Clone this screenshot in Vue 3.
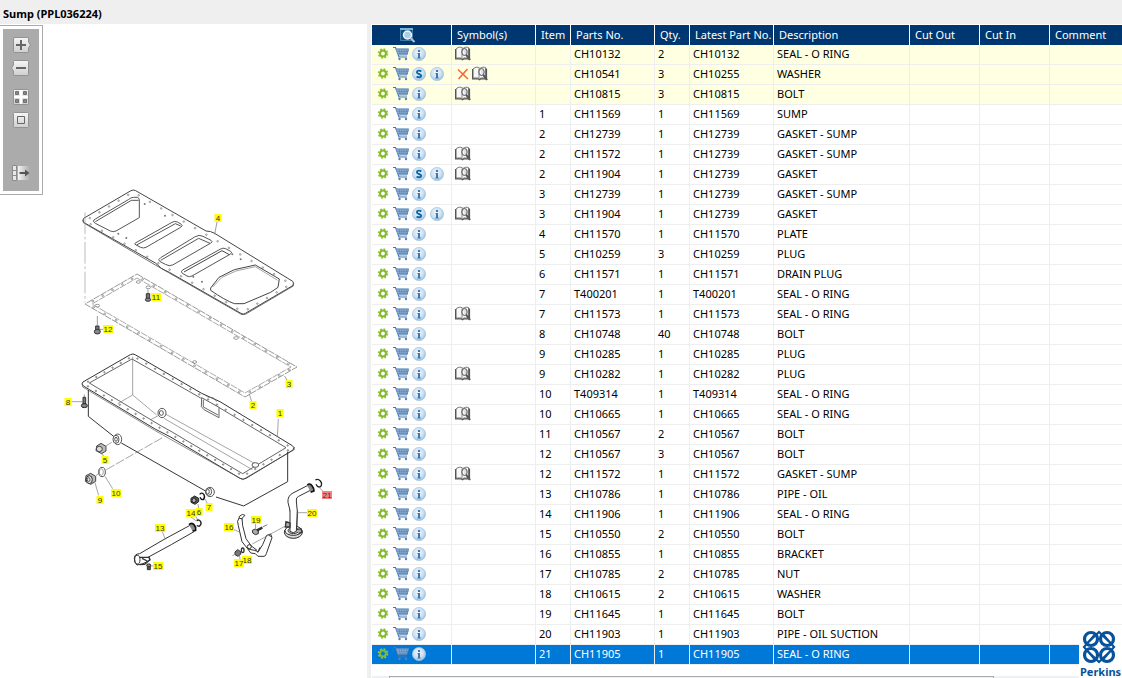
<script setup>
import { ref } from 'vue'

// symbols: b = page reference, x = not serviced; s = supersession available
const source = [
  ['', 'CH10132', '2', 'CH10132', 'SEAL - O RING', 'b'],
  ['', 'CH10541', '3', 'CH10255', 'WASHER', 'xb', true],
  ['', 'CH10815', '3', 'CH10815', 'BOLT', 'b'],
  ['1', 'CH11569', '1', 'CH11569', 'SUMP', ''],
  ['2', 'CH12739', '1', 'CH12739', 'GASKET - SUMP', ''],
  ['2', 'CH11572', '1', 'CH12739', 'GASKET - SUMP', 'b'],
  ['2', 'CH11904', '1', 'CH12739', 'GASKET', 'b', true],
  ['3', 'CH12739', '1', 'CH12739', 'GASKET - SUMP', ''],
  ['3', 'CH11904', '1', 'CH12739', 'GASKET', 'b', true],
  ['4', 'CH11570', '1', 'CH11570', 'PLATE', ''],
  ['5', 'CH10259', '3', 'CH10259', 'PLUG', ''],
  ['6', 'CH11571', '1', 'CH11571', 'DRAIN PLUG', ''],
  ['7', 'T400201', '1', 'T400201', 'SEAL - O RING', ''],
  ['7', 'CH11573', '1', 'CH11573', 'SEAL - O RING', 'b'],
  ['8', 'CH10748', '40', 'CH10748', 'BOLT', ''],
  ['9', 'CH10285', '1', 'CH10285', 'PLUG', ''],
  ['9', 'CH10282', '1', 'CH10282', 'PLUG', 'b'],
  ['10', 'T409314', '1', 'T409314', 'SEAL - O RING', ''],
  ['10', 'CH10665', '1', 'CH10665', 'SEAL - O RING', 'b'],
  ['11', 'CH10567', '2', 'CH10567', 'BOLT', ''],
  ['12', 'CH10567', '3', 'CH10567', 'BOLT', ''],
  ['12', 'CH11572', '1', 'CH11572', 'GASKET - SUMP', 'b'],
  ['13', 'CH10786', '1', 'CH10786', 'PIPE - OIL', ''],
  ['14', 'CH11906', '1', 'CH11906', 'SEAL - O RING', ''],
  ['15', 'CH10550', '2', 'CH10550', 'BOLT', ''],
  ['16', 'CH10855', '1', 'CH10855', 'BRACKET', ''],
  ['17', 'CH10785', '2', 'CH10785', 'NUT', ''],
  ['18', 'CH10615', '2', 'CH10615', 'WASHER', ''],
  ['19', 'CH11645', '1', 'CH11645', 'BOLT', ''],
  ['20', 'CH11903', '1', 'CH11903', 'PIPE - OIL SUCTION', ''],
  ['21', 'CH11905', '1', 'CH11905', 'SEAL - O RING', '']
]
const parts = source.map(([item, no, qty, latest, desc, symbols, s]) => ({ item, no, qty, latest, desc, symbols, s: !!s }))
const selected = ref(parts.length - 1)

const callouts = [
  ['4', 218, 218], ['11', 156, 297], ['12', 108, 329], ['3', 289, 384], ['2', 253, 405],
  ['1', 280, 413], ['8', 68, 402], ['5', 105, 460], ['9', 100, 500], ['10', 116, 493],
  ['7', 209, 507], ['14', 191, 513], ['6', 199, 512], ['13', 160, 528], ['15', 158, 566],
  ['16', 229, 527], ['19', 256, 520], ['18', 247, 560], ['17', 239, 563], ['20', 312, 513], ['21', 327, 495]
].map(([n, x, y]) => ({ n, x, y, w: n.length > 1 ? 10 : 7 }))

function along(points, counts) {
  const out = []
  points.forEach(([x1, y1], i) => {
    const [x2, y2] = points[(i + 1) % points.length]
    for (let k = 0; k < counts[i]; k++) {
      const t = (k + 0.5) / counts[i]
      out.push({ x: x1 + (x2 - x1) * t, y: y1 + (y2 - y1) * t })
    }
  })
  return out
}
const plateHoles = along([[133, 192], [291, 284], [243, 312], [85, 221]], [14, 5, 14, 5])
const gasketHoles = along([[137, 276], [294, 367], [245, 395], [88, 304]], [14, 5, 14, 5])
const rimHoles = along([[133, 356], [292, 448], [243, 476], [84, 384]], [18, 6, 20, 6])
</script>

<template>
  <div class="page">
    <svg class="defs" aria-hidden="true">
      <defs>
        <radialGradient id="disc" cx=".45" cy=".4" r=".6">
          <stop offset="0" stop-color="#f2f7fc" /><stop offset=".65" stop-color="#cbdff1" /><stop offset="1" stop-color="#98bfde" />
        </radialGradient>
        <linearGradient id="key" x2="0" y2="1">
          <stop offset="0" stop-color="#f6f6f6" /><stop offset="1" stop-color="#cfcfcf" />
        </linearGradient>
        <linearGradient id="fade">
          <stop offset="0" stop-color="#f4f4f4" /><stop offset="1" stop-color="#ababab" />
        </linearGradient>
      </defs>
      <symbol id="gear" viewBox="0 0 13 16">
        <circle cx="6" cy="7.500" r="4.300" fill="none" stroke="#98c840" stroke-width="2" stroke-dasharray="1.800 1.577" />
        <circle cx="6" cy="7.500" r="2.900" fill="none" stroke="#82b92f" stroke-width="2" />
      </symbol>
      <symbol id="cart" viewBox="0 0 16 16">
        <path d="M0 1.500h2.500l3.500 9.500h8" fill="none" stroke="#4a76aa" stroke-width="1.200" />
        <path d="M3 2.500h13l-2 6H5z" fill="#9dbbdc" />
        <path d="M3 3h12.500M4 5.200h11.500M4.500 7.200H15M5 9h9M15.500 3l-1.500 6" fill="none" stroke="#4573aa" stroke-width=".7" />
        <path d="M6 3l1.300 6M8.500 3l.5 6M11 3v6M13.500 3l-.8 6" fill="none" stroke="#527fb3" stroke-width=".6" />
        <circle cx="6.500" cy="13" r="1.200" fill="#4a86c5" /><circle cx="13" cy="13" r="1.200" fill="#4a86c5" />
      </symbol>
      <symbol id="info" viewBox="0 0 15 15">
        <circle cx="7" cy="7" r="6.600" fill="url(#disc)" stroke="#a4c4de" stroke-width=".7" />
        <path d="M6 3h2v2H6zM5.500 6H8v4.500h.7v1H5.400v-1H6V7h-.5z" fill="#3f78ae" />
      </symbol>
      <symbol id="super" viewBox="0 0 15 15">
        <circle cx="7" cy="7" r="6.600" fill="url(#disc)" stroke="#a4c4de" stroke-width=".7" />
        <path d="M9.300 4.500C8 3.300 4.900 3.200 4.900 5.200c0 2 4.300 1.600 4.300 3.600 0 2-3.200 1.800-4.600.7" fill="none" stroke="#0868a8" stroke-width="1.900" />
      </symbol>
      <symbol id="book" viewBox="0 0 16 16">
        <path d="M1 3L3 1.500C5 1 6.500 1 8 2.500 9.500 1 12 1 13.500 1.500V12H9l-1.500 1L6 12H1z" fill="#f7f7f7" stroke="#777" />
        <path d="M.5 3v9.800H6l1.500 1 1.500-1h5.500V2.500" fill="none" stroke="#555" stroke-width="1.200" />
        <path d="M7 2.500v10" stroke="#888" />
        <ellipse cx="9.500" cy="6" rx="2.700" ry="3.500" fill="#dce0e4" stroke="#555" />
        <path d="M8.700 4.500v3.500" stroke="#fff" />
        <path d="M11.300 8.800l3.700 5.200" stroke="#555" stroke-width="2" />
      </symbol>
      <symbol id="cross" viewBox="0 0 12 16">
        <path d="M1 3.500l10 9.500M10.500 3L1.500 13" stroke="#f76932" stroke-width="1.600" fill="none" />
      </symbol>
    </svg>

    <section class="drawing-pane">
      <h1>Sump (PPL036224)</h1>
      <div class="stage">
        <svg class="drawing" viewBox="0 24 367 654" role="img" aria-label="Sump exploded view">
          <g fill="none" stroke="#6d6d6d" stroke-width="3">
            <!-- cover plate -->
            <g transform="translate(70 180) scale(.33333)">
              <path d="M183 32q7-4 14 0L408 153q14 0 26 7L668 304q6 6 0 13L526 400q-6 5-13 0L298 277q-24-8-42-28L44 129q-10-5-3-14z" stroke="#444" />
              <path d="M40 120v8L256 255l40 23 220 126 10-1 144-85v-9" stroke="#555" stroke-width="2.500" />
              <path d="M190 52h12q6 2 6 8v53l-70 40q-8 4-17 0L76 130q-11-7 0-13L175 59q8-7 15-7z" stroke="#555" />
              <path d="M76 125l108-64h22M198 188l108-61q8-5 16-1l12 7q6 4-2 9L228 202q-8 4-16 0l-14-7q-8-4 0-7z" stroke="#555" />
              <path d="M200 195l116-64 16 7M272 233l102-62q14-9 25-2l24 12q8 4-2 9L308 255q-10 5-22-2l-17-9q-7-5 3-11z" stroke="#555" />
              <path d="M272 241l114-66 34 15M338 270l112-62q9-6 17-2l15 8q7 4-2 9L366 288q-8 4-15 0l-14-8q-6-5 1-10z" stroke="#555" />
              <path d="M342 276l114-64 22 12M422 324l25-32 46-23 63-14 72 42-4 25-22 15-80 34h-29q-28-10-71-40z" stroke="#444" />
              <path d="M428 321l28-29 42-19 58-13 67 41" stroke="#777" stroke-width="2" />
              <path d="M45 97v270" stroke-width="2" stroke="#999" stroke-dasharray="65 8 8 8" />
              <path d="M441 126l-7 37M82 408v28M234 328v16M245 352h14M88 448h12" stroke-width="2" />
              <path d="M77 438h10v14H77zM229 341h10v16h-10z" fill="#777" stroke="#333" />
              <ellipse cx="82" cy="455" rx="9" ry="7" fill="#888" stroke="#333" /><ellipse cx="234" cy="359" rx="8" ry="5" fill="#888" stroke="#333" />
              <g stroke-width="2"><ellipse cx="235" cy="322" rx="7" ry="4" /><ellipse cx="205" cy="306" rx="6" ry="4" /><ellipse cx="82" cy="377" rx="7" ry="4" /><ellipse cx="498" cy="474" rx="7" ry="4" /></g>
              <g fill="#777" stroke="none"><circle cx="224" cy="72" r="3" /><circle cx="285" cy="107" r="3" /><circle cx="145" cy="161" r="3" /><circle cx="169" cy="174" r="3" /><circle cx="487" cy="223" r="3" /><circle cx="512" cy="238" r="3" /><circle cx="370" cy="290" r="3" /><circle cx="396" cy="305" r="3" /></g>
            </g>
            <!-- gasket -->
            <path d="M137 274L297 367 245 397 85 304z" stroke="#999" stroke-width="1" stroke-dasharray="7 1" />
            <path d="M137 278L291 367 245 393 92 304z" stroke="#aaa" stroke-width="1" stroke-dasharray="7 1" />
            <circle v-for="(h, i) in plateHoles" :key="'p' + i" :cx="h.x" :cy="h.y" r=".8" stroke="#777" stroke-width=".7" />
            <circle v-for="(h, i) in gasketHoles" :key="'g' + i" :cx="h.x" :cy="h.y" r=".9" stroke="#777" stroke-width=".7" />
            <!-- sump -->
            <g transform="translate(60 340) scale(.33333)">
              <path d="M211 44q8-5 16 1L425 160l55 25 217 132q9 6 2 13L558 415q-8 5-18 0L330 290l-43-22L70 138q-8-6-1-12z" stroke="#333" />
              <path d="M216 57L422 174l56 29 200 120-130 78L338 277l-34-19L88 129z" stroke="#444" stroke-width="2.500" />
              <path d="M68 133v8l216 130 44 25 220 123 155-90v-8" stroke="#555" stroke-width="2" />
              <path d="M85 150v79l77 61M184 309l256 146M468 471l83 27 132-73v-90" stroke="#333" />
              <path d="M218 50v115l-45 26M218 165l72 60M270 240l25-13M316 222l280 155M312 235l265 154" stroke="#777" stroke-width="2" />
              <path d="M425 173l52 29v31l-45-24-8-9zM430 179v22l44 24" fill="#fff" stroke="#666" stroke-width="3" />
              <path d="M435 165l10 7 15 1 10 12" stroke-width="2" />
              <g fill="#fff" stroke="#555"><ellipse cx="306" cy="219" rx="12" ry="14" /><ellipse cx="304" cy="219" rx="6" ry="7" /><ellipse cx="173" cy="298" rx="12" ry="16" /><ellipse cx="168" cy="298" rx="9" ry="12" /><ellipse cx="168" cy="298" rx="4" ry="6" /><ellipse cx="450" cy="456" rx="13" ry="14" /><ellipse cx="446" cy="455" rx="9" ry="11" /><ellipse cx="443" cy="455" rx="5" ry="7" /><ellipse cx="586" cy="375" rx="10" ry="7" /></g>
              <path d="M110 318l13-8 15 9v14l-13 8-17-9zM78 407l14-7 15 9v15l-15 9-16-9z" fill="#bbb" stroke="#444" />
              <ellipse cx="118" cy="327" rx="9" ry="8" fill="#ddd" stroke="#444" /><ellipse cx="88" cy="419" rx="9" ry="12" fill="#ddd" stroke="#333" /><ellipse cx="86" cy="419" rx="4" ry="6" stroke="#666" />
              <ellipse cx="126" cy="396" rx="10" ry="14" stroke="#555" /><ellipse cx="124" cy="396" rx="6" ry="10" stroke="#777" stroke-width="2" />
              <path d="M393 475l11-7 12 7v10l-11 8-12-6z" fill="#555" stroke="#222" /><ellipse cx="402" cy="481" rx="6" ry="7" fill="#aaa" stroke="#222" />
              <path d="M419 463q6-8 13 1 4 9-2 15-7 1-10-7" stroke="#111" stroke-width="4" />
              <path d="M136 319l19-12M108 407l8-7M139 389l170-97" stroke="#777" stroke-width="2" stroke-dasharray="28 5" />
              <path d="M73 163v20M34 185h34M124 338l7 10M105 428l11 38M135 409l23 37M434 476l8 14M414 492l2 12M405 525l8 15M655 237l-3 54M568 162l7 23M674 108l7 12" stroke="#777" stroke-width="2" />
              <path d="M69 172h8v20h-8z" fill="#777" stroke="#333" /><ellipse cx="73" cy="197" rx="9" ry="6" fill="#888" stroke="#222" />
              <ellipse cx="404" cy="66" rx="6" ry="4" stroke-width="2" />
            </g>
            <circle v-for="(h, i) in rimHoles" :key="'r' + i" :cx="h.x" :cy="h.y" r=".7" stroke="#555" stroke-width=".7" />
            <!-- pipes and bracket -->
            <g transform="translate(120 470) scale(.33333)" stroke="#333">
              <path d="M210 166q-75 39-151 85M222 185Q155 224 84 262" />
              <path d="M207 164q8-8 15 0t5 17l-9 3" fill="#888" stroke="#111" stroke-width="5" />
              <path d="M59 251q-16 1-16 14t8 20l18-4 21-10-4-10" fill="#fff" stroke="#222" />
              <ellipse cx="52" cy="269" rx="8" ry="13" /><path d="M58 262h29l3 7-16 14-15 1M66 265l16 8" stroke-width="4" />
              <path d="M82 283h9v16h-9z" fill="#555" /><ellipse cx="86" cy="286" rx="6" ry="4" fill="#888" />
              <path d="M230 152q8-5 12 3t-4 14l-8-2" stroke="#222" stroke-width="4" />
              <path d="M562 47l-43 22q-17 9-15 28l8 32-2 57q10 10 20 0l2-60-3-33q-2-11 7-14l39-20z" fill="#fff" />
              <path d="M562 45q7-7 14 2t6 16l-10 4" fill="#888" stroke="#111" stroke-width="5" />
              <path d="M586 30q8-5 15 3t1 17q-9 4-14-7" stroke="#222" stroke-width="4" />
              <ellipse cx="520" cy="187" rx="27" ry="18" fill="#ddd" stroke="#222" /><ellipse cx="520" cy="182" rx="25" ry="14" fill="#fff" stroke="#222" />
              <ellipse cx="520" cy="182" rx="16" ry="9" fill="#ccc" stroke="#333" />
              <path d="M510 120v64q10 8 19 0l3-64" fill="#fff" /><path d="M498 155l12 4v12h-14zM531 178l12-2 3 10-10 5" fill="#aaa" stroke-width="4" />
              <path d="M358 143q-9 10-3 24l11 48 16 20 13 8 15-3-16-12-16-22-10-39-2-22 9-9q-7-7-17 3z" fill="#fff" />
              <path d="M382 235l10 14 14 2 8 8h18q5 0 7-8l17-48-4-11-12 4-12 28-13 21-12-4-18-4" fill="#fff" />
              <circle cx="388" cy="230" r="6" /><path d="M420 232l-7 16M356 144l12 3M447 196l9 5" />
              <path d="M397 181l9-4 9 6v8l-9 3-8-5z" fill="#aaa" /><path d="M411 181l16-8" stroke-width="7" /><path d="M428 171l14-7" stroke-width="2" />
              <path d="M345 246l8-7 9 6v8l-8 6-9-5z" fill="#777" /><ellipse cx="368" cy="241" rx="4" ry="7" stroke-width="4" />
              <path d="M397 222l99-54M337 257l10-5M127 185l9 23M92 288h11M209 138l20 15M340 178l18 8M406 160l1 15M359 257l1 13M530 128h33M598 53l12 12" stroke="#777" stroke-width="2" />
            </g>
          </g>
          <g class="callouts">
            <g v-for="c in callouts" :key="c.n">
              <rect :x="c.x - c.w / 2" :y="c.y - 4" :width="c.w" height="8" :fill="c.n === '21' ? '#f77f7f' : '#ffff00'" />
              <text :x="c.x" :y="c.y + 3">{{ c.n }}</text>
            </g>
          </g>
        </svg>

        <div class="toolbar">
          <button aria-label="Zoom in"><svg viewBox="0 0 20 18"><path d="M4 1.500h13q.5 0 .5.500v4l2 3-2 3v4q0 .5-.5.500H4q-1.500 0-1.500-1V3q0-1.500 1.500-1.500z" fill="url(#key)" stroke="#929292" /><path d="M10 4v10M5 9h10" stroke="#666" stroke-width="2" /></svg></button>
          <button aria-label="Zoom out"><svg viewBox="0 0 20 18"><path d="M4 1.500h12q1.500 0 1.500 1v13q0 1-1.500 1H3q-.5 0-.5-.5v-4l-2-3 2-3V2.500q0-1 1.500-1z" fill="url(#key)" stroke="#929292" /><path d="M5 9h10" stroke="#666" stroke-width="2" /></svg></button>
          <button class="spaced" aria-label="Show tiles"><svg viewBox="0 0 20 18"><rect x="2.500" y="1.500" width="15" height="15" rx="1" fill="url(#key)" stroke="#929292" /><path d="M10 2v14M3 9h14" stroke="#fff" stroke-width="2" /><path d="M4.500 3.500h3v3h-3zM12.500 3.500h3v3h-3zM4.500 11.500h3v3h-3zM12.500 11.500h3v3h-3z" fill="#888" stroke="#707070" /></svg></button>
          <button aria-label="Fit to window"><svg viewBox="0 0 20 18"><rect x="2.500" y="1.500" width="15" height="15" rx="1" fill="url(#key)" stroke="#929292" /><path d="M6.500 5.500h7v7h-7z" fill="none" stroke="#666" /></svg></button>
          <button class="last" aria-label="Hide list"><svg viewBox="0 0 20 18"><path d="M7 2h12v14H7z" fill="url(#fade)" /><path d="M1.500 1.500h4v15h-4zM1.500 6.500h4M1.500 11.500h4" fill="#e8e8e8" stroke="#8c8c8c" /><path d="M8.500 9H15" stroke="#555" stroke-width="2" /><path d="M14 5.500L18.500 9 14 12.500z" fill="#555" /></svg></button>
        </div>
      </div>
    </section>

    <section class="list-pane">
      <table>
        <colgroup>
          <col class="w80"><col class="w84"><col class="w35"><col class="w84"><col class="w35"><col class="w84"><col class="w136"><col class="w70"><col class="w70"><col>
        </colgroup>
        <thead>
          <tr>
            <th class="find">
              <button aria-label="Search list"><svg viewBox="0 0 18 16"><path d="M2.500 1.500h12v12h-12z" fill="#12507f" stroke="#3d7ba8" /><path d="M2 2h13" stroke="#78b4db" stroke-width="2" /><circle cx="9.500" cy="8" r="4" fill="#a9cfe8" stroke="#eef6fb" stroke-width="1.500" /><path d="M12.500 11l4 4" stroke="#b5c2cd" stroke-width="2" /></svg></button>
            </th>
            <th>Symbol(s)</th><th>Item</th><th>Parts No.</th><th>Qty.</th><th>Latest Part No.</th><th>Description</th><th>Cut Out</th><th>Cut In</th><th>Comment</th>
          </tr>
        </thead>
        <tbody>
          <tr v-for="(p, i) in parts" :key="i" :class="{ general: !p.item, selected: i === selected }" @click="selected = i">
            <td>
              <div class="icons">
                <button class="gear" aria-label="Options"><svg><use href="#gear" /></svg></button>
                <button class="cart" aria-label="Add to cart"><svg><use href="#cart" /></svg></button>
                <button v-if="p.s" class="round" aria-label="Supersession"><svg><use href="#super" /></svg></button>
                <button class="round" aria-label="Information"><svg><use href="#info" /></svg></button>
              </div>
            </td>
            <td>
              <div class="symbols">
                <svg v-if="p.symbols.includes('x')" class="cross"><use href="#cross" /></svg>
                <svg v-if="p.symbols.includes('b')" class="book"><use href="#book" /></svg>
              </div>
            </td>
            <td>{{ p.item }}</td><td>{{ p.no }}</td><td>{{ p.qty }}</td><td>{{ p.latest }}</td><td>{{ p.desc }}</td><td></td><td></td><td></td>
          </tr>
        </tbody>
      </table>
      <div class="scroll"><span></span></div>
      <div class="brand">
        <svg viewBox="0 0 34 36" aria-hidden="true">
          <g fill="none" stroke="#07529a" stroke-width="3.200">
            <circle cx="9" cy="10" r="6.500" /><circle cx="25" cy="10" r="6.500" /><circle cx="9" cy="26" r="6.500" /><circle cx="25" cy="26" r="6.500" />
            <path d="M5 14.500L17 3l12 11.500M5 21.500L17 33l12-11.500M13 5.500L2 18l11 12.500M21 5.500L32 18 21 30.500" stroke-width="2.200" />
          </g>
        </svg>
        <strong>Perkins</strong>
      </div>
    </section>
  </div>
</template>

<style>
html, body, #app { height: 100%; }
body { margin: 0; overflow: hidden; }
</style>

<style scoped>
.page { display: grid; grid-template-columns: minmax(0, 367fr) minmax(0, 755fr); height: 100%; background: #efefef; color: #000; font: 11px/18px "Noto Sans", "Open Sans", sans-serif; }
.defs { position: absolute; width: 0; height: 0; }
button { display: block; margin: 0; padding: 0; border: 0; background: none; cursor: pointer; }
svg { display: block; }
.drawing-pane { display: flex; flex-direction: column; min-height: 0; }
h1 { margin: 0; padding: 4px 3px 0; height: 20px; font-size: 11px; line-height: 20px; font-weight: 700; white-space: nowrap; }
.stage { position: relative; flex: 1; background: #fff; }
.drawing { width: 100%; }
.callouts text { font: 8px "Liberation Sans", sans-serif; text-anchor: middle; fill: #333; }
.toolbar { position: absolute; left: 0; top: 1px; box-sizing: border-box; width: 43px; height: 170px; padding: 10px 10px 0 8px; border: 1px solid #aaa; border-left: 0; background: #ababab; box-shadow: inset 3px 3px #fff, inset -3px -3px #fff; }
.toolbar button { margin: 0 0 5px 3px; }
.toolbar svg { width: 20px; height: 18px; }
.toolbar .spaced { margin-top: 11px; }
.toolbar .last { margin-top: 35px; }
.list-pane { position: relative; display: flex; flex-direction: column; min-height: 0; overflow: hidden; margin-top: 24px; margin-left: 4px; padding-left: 1px; padding-top: 1px; background: #fff; }
table { width: 100%; table-layout: fixed; border-collapse: separate; border-spacing: 0; }
.w80 { width: 80px; } .w84 { width: 84px; } .w35 { width: 35px; } .w136 { width: 136px; } .w70 { width: 70px; }
th, td { box-sizing: border-box; height: 20px; padding: 0 0 0 3px; border-right: 1px solid #eee; text-align: left; white-space: nowrap; overflow: hidden; }
th { padding-left: 5px; border-right-color: #fff; background: #003770; color: #fff; font-weight: 400; line-height: 20px; }
td { padding-bottom: 1px; border-bottom: 1px solid #eee; }
th:last-child, td:last-child { border-right: 0; }
.find { padding: 0 10px 0 0; }
.find button { margin: 0 auto; }
.find svg { width: 18px; height: 16px; }
.general td { background: #ffffe1; }
.selected td { background: #0078d7; color: #fff; }
.icons { display: flex; align-items: center; gap: 3px; padding-left: 2px; }
.icons svg { width: 100%; height: 100%; }
.gear { width: 13px; height: 16px; }
.cart { width: 16px; height: 16px; }
.round { width: 15px; height: 15px; }
.symbols { display: flex; align-items: center; gap: 3px; }
.cross { width: 12px; height: 16px; margin-left: 2px; }
.book { width: 16px; height: 16px; }
.scroll { display: flex; margin-top: auto; height: 2px; background: #eef0f4; }
.scroll span { width: 605px; height: 2px; margin-left: 17px; box-sizing: border-box; border: 1px solid #aaa; border-bottom: 0; }
.brand { position: absolute; right: 0; bottom: 0; width: 43px; padding-top: 2px; background: #fff; color: #07529a; }
.brand svg { width: 34px; height: 36px; margin-left: 3px; }
.brand strong { display: block; padding-left: 1px; font-size: 11px; line-height: 13px; }
</style>
